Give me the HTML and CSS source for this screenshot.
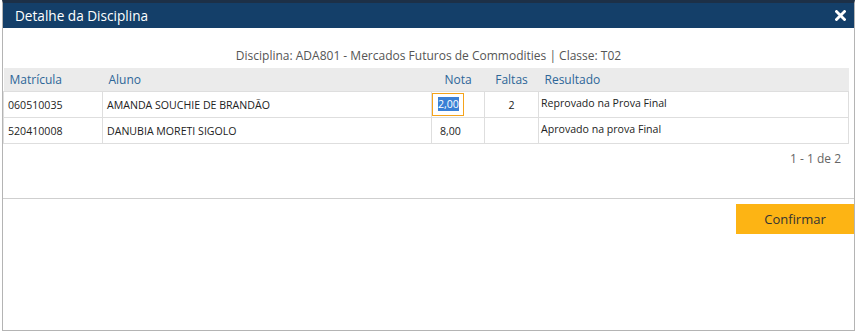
FILE: index.html
```html
<!DOCTYPE html>
<html lang="pt-BR">
<head>
    <meta charset="UTF-8">
    <title>Detalhe da Disciplina</title>
    <link rel="stylesheet" href="styles.css">
</head>
<body>
    <div class="modal">
        <div class="modal-header">
            <span class="modal-title">Detalhe da Disciplina</span>
            <svg class="close" width="11" height="11" viewBox="0 0 11 11">
                <path d="M1.5 1.5 L9.5 9.5 M9.5 1.5 L1.5 9.5" stroke="#fff" stroke-width="2.8" stroke-linecap="square"/>
            </svg>
        </div>

        <div class="modal-body">
            <p class="subtitle">Disciplina: ADA801 - Mercados Futuros de Commodities | Classe: T02</p>

            <table class="grid">
                <colgroup>
                    <col style="width: 99px">
                    <col style="width: 329px">
                    <col style="width: 53px">
                    <col style="width: 54px">
                    <col style="width: 310px">
                </colgroup>
                <tr>
                    <th>Matrícula</th>
                    <th>Aluno</th>
                    <th class="center">Nota</th>
                    <th class="center">Faltas</th>
                    <th>Resultado</th>
                </tr>
                <tr>
                    <td>060510035</td>
                    <td>AMANDA SOUCHIE DE BRANDÃO</td>
                    <td class="nota-edit"><span class="nota-input"><span class="selected">2,00</span></span></td>
                    <td class="center">2</td>
                    <td class="resultado">Reprovado na Prova Final</td>
                </tr>
                <tr>
                    <td>520410008</td>
                    <td>DANUBIA MORETI SIGOLO</td>
                    <td class="nota">8,00</td>
                    <td class="center"></td>
                    <td class="resultado">Aprovado na prova Final</td>
                </tr>
            </table>

            <div class="pager">1 - 1 de 2</div>
        </div>

        <div class="modal-footer">
            <button class="btn-confirm">Confirmar</button>
        </div>
    </div>
</body>
</html>
```

FILE: styles.css
```css
body {
    margin: 0;
    font-family: "Open Sans", Arial, sans-serif;
    background-color: #fff;
}
.modal {
    margin-left: 2px;
    width: 851px;
    height: 327px;
    border: 1px solid #b4b4b4;
    border-top: 3px solid #1d3047;
    display: flex;
    flex-direction: column;
}
.modal-header {
    background-color: #143f69;
    height: 25px;
    display: flex;
    align-items: center;
    justify-content: space-between;
    padding: 0 8px 0 12px;
}
.modal-title {
    color: #fff;
    font-size: 13.6px;
}
.close {
    display: block;
}
.modal-body {
    height: 170px;
    border-bottom: 1px solid #cfcfcf;
}
.subtitle {
    margin: 19px 0 0;
    height: 21px;
    text-align: center;
    font-size: 12px;
    color: #555;
}
.grid {
    border-collapse: collapse;
    table-layout: fixed;
    width: 845px;
    font-size: 10.6px;
    color: #222;
}
.grid th {
    background-color: #ebebeb;
    color: #2d6698;
    font-weight: normal;
    font-size: 12px;
    text-align: left;
    height: 23px;
    padding: 0 6px;
}
.grid td {
    border: 1px solid #dedede;
    height: 26px;
    padding: 0 4px;
    box-sizing: border-box;
    line-height: 14px;
}
.grid .center {
    text-align: center;
}
.grid .nota {
    padding-left: 8px;
}
.grid .resultado {
    padding: 4px 2px 0;
    vertical-align: top;
}
.grid .nota-edit {
    padding: 0;
}
.nota-input {
    display: block;
    width: 25px;
    height: 21px;
    line-height: 21px;
    border: 1px solid #f5a31a;
    padding-left: 5px;
}
.selected {
    background-color: #3a7fd5;
    color: #fff;
}
.pager {
    text-align: right;
    padding: 6px 13px 0 0;
    font-size: 12px;
    color: #666;
}
.modal-footer {
    display: flex;
    justify-content: flex-end;
    padding-top: 5px;
}
.btn-confirm {
    background-color: #fdb414;
    border: none;
    width: 118px;
    height: 30px;
    font-family: "Open Sans", Arial, sans-serif;
    font-size: 13px;
    color: #333;
}
```
